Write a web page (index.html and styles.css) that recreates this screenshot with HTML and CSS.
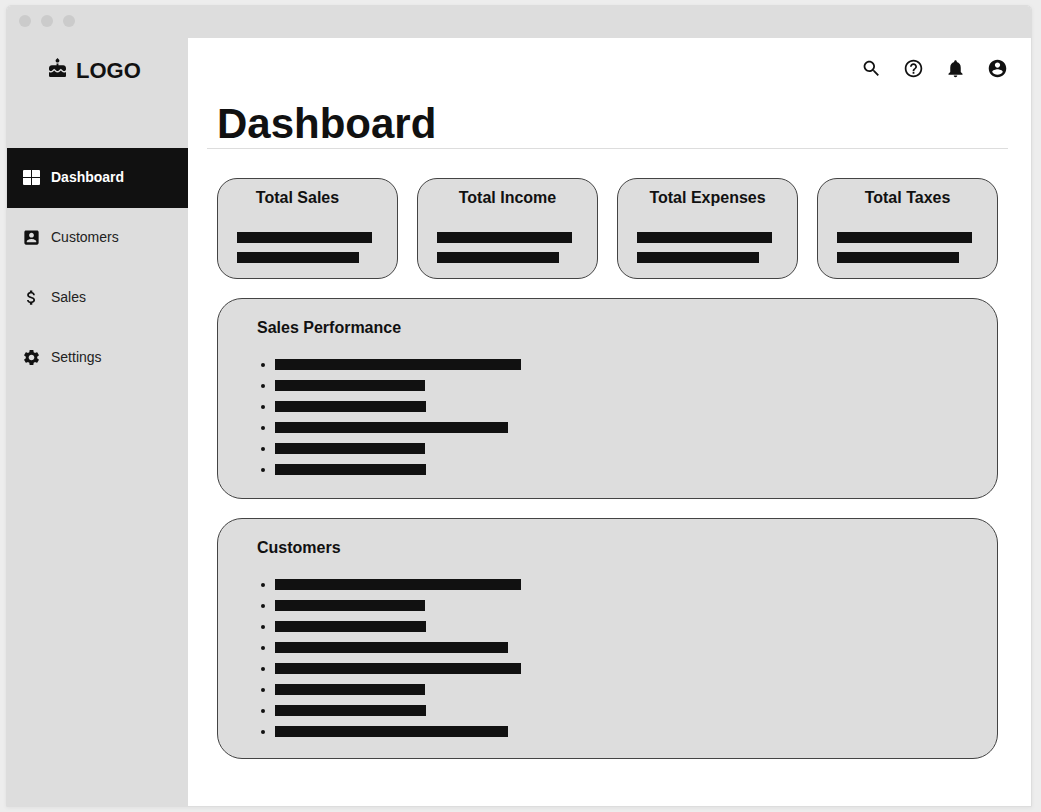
FILE: index.html
```html
<!DOCTYPE html>
<html lang="en">
<head>
<meta charset="utf-8">
<title>Dashboard</title>
<link rel="stylesheet" href="styles.css">
</head>
<body>
<div class="window">
  <div class="titlebar"><span class="dot"></span><span class="dot"></span><span class="dot"></span></div>
  <div class="layout">
    <aside class="sidebar">
      <div class="brand">
        <svg class="brand-icon" viewBox="3 1 18 21" preserveAspectRatio="none" aria-hidden="true"><path d="M12 6c1.11 0 2-.9 2-2 0-.38-.1-.73-.29-1.03L12 1l-1.71 1.97c-.19.3-.29.65-.29 1.03 0 1.1.9 2 2 2zm4.6 9.99l-1.07-1.07-1.08 1.07c-1.3 1.3-3.58 1.31-4.89 0l-1.07-1.07-1.09 1.07C6.75 16.64 5.88 17 4.96 17c-.73 0-1.4-.23-1.96-.61V21c0 .55.45 1 1 1h16c.55 0 1-.45 1-1v-4.61c-.56.38-1.23.61-1.96.61-.92 0-1.79-.36-2.44-1.01zM18 9h-5V7h-2v2H6c-1.66 0-3 1.34-3 3v1.54c0 1.08.88 1.96 1.96 1.96.52 0 1.02-.2 1.38-.57l2.14-2.13 2.13 2.13c.74.74 2.03.74 2.77 0l2.14-2.13 2.13 2.13c.37.37.86.57 1.38.57 1.08 0 1.96-.88 1.96-1.96V12C21 10.34 19.66 9 18 9z"/></svg>
        <span>LOGO</span>
      </div>
      <nav class="menu">
        <a class="menu-item active" href="#" aria-current="page"><svg viewBox="0 0 19 19" aria-hidden="true"><path d="M2 2h7v7H1V3q0-1 1-1zM10 2h7q1 0 1 1v6h-8zM1 10h8v7H2q-1 0-1-1zM10 10h8v6q0 1-1 1h-7z"/></svg>Dashboard</a>
        <a class="menu-item" href="#"><svg viewBox="0 0 24 24" aria-hidden="true"><path d="M3 5v14c0 1.1.89 2 2 2h14c1.1 0 2-.9 2-2V5c0-1.1-.9-2-2-2H5c-1.11 0-2 .9-2 2zm12 4c0 1.66-1.34 3-3 3s-3-1.34-3-3 1.34-3 3-3 3 1.34 3 3zm-9 8c0-2 4-3.1 6-3.1s6 1.1 6 3.1v1H6v-1z"/></svg>Customers</a>
        <a class="menu-item" href="#"><svg viewBox="0 0 24 24" aria-hidden="true"><path d="M11.8 10.9c-2.27-.59-3-1.2-3-2.15 0-1.09 1.01-1.85 2.7-1.85 1.78 0 2.44.85 2.5 2.1h2.21c-.07-1.72-1.12-3.3-3.21-3.81V3h-3v2.16c-1.94.42-3.5 1.68-3.5 3.61 0 2.31 1.91 3.46 4.7 4.13 2.5.6 3 1.48 3 2.41 0 .69-.49 1.79-2.7 1.79-2.06 0-2.87-.92-2.98-2.1h-2.2c.12 2.19 1.76 3.42 3.68 3.83V21h3v-2.15c1.95-.37 3.5-1.5 3.5-3.55 0-2.84-2.43-3.81-4.7-4.4z"/></svg>Sales</a>
        <a class="menu-item" href="#"><svg viewBox="0 0 24 24" aria-hidden="true"><path d="M19.14 12.94c.04-.3.06-.61.06-.94 0-.32-.02-.64-.07-.94l2.03-1.58c.18-.14.23-.41.12-.61l-1.92-3.32c-.12-.22-.37-.29-.59-.22l-2.39.96c-.5-.38-1.03-.7-1.62-.94l-.36-2.54c-.04-.24-.24-.41-.48-.41h-3.84c-.24 0-.43.17-.47.41l-.36 2.54c-.59.24-1.13.57-1.62.94l-2.39-.96c-.22-.08-.47 0-.59.22L2.74 8.87c-.12.21-.08.47.12.61l2.03 1.58c-.05.3-.09.63-.09.94s.02.64.07.94l-2.03 1.58c-.18.14-.23.41-.12.61l1.92 3.32c.12.22.37.29.59.22l2.39-.96c.5.38 1.03.7 1.62.94l.36 2.54c.05.24.24.41.48.41h3.84c.24 0 .44-.17.47-.41l.36-2.54c.59-.24 1.13-.56 1.62-.94l2.39.96c.22.08.47 0 .59-.22l1.92-3.32c.12-.22.07-.47-.12-.61l-2.01-1.58zM12 15.6c-1.98 0-3.6-1.62-3.6-3.6s1.62-3.6 3.6-3.6 3.6 1.62 3.6 3.6-1.62 3.6-3.6 3.6z"/></svg>Settings</a>
      </nav>
    </aside>
    <main class="main">
      <div class="toolbar">
        <button class="icon-button" type="button" aria-label="Search"><svg viewBox="0 0 24 24"><path d="M15.5 14h-.79l-.28-.27C15.41 12.59 16 11.11 16 9.5 16 5.91 13.09 3 9.5 3S3 5.91 3 9.5 5.91 16 9.5 16c1.61 0 3.09-.59 4.23-1.57l.27.28v.79l5 4.99L20.49 19l-4.99-5zm-6 0C7.01 14 5 11.99 5 9.5S7.01 5 9.5 5 14 7.01 14 9.5 11.99 14 9.5 14z"/></svg></button>
        <button class="icon-button" type="button" aria-label="Help"><svg viewBox="0 0 24 24"><path d="M11 18h2v-2h-2v2zm1-16C6.48 2 2 6.48 2 12s4.48 10 10 10 10-4.48 10-10S17.52 2 12 2zm0 18c-4.41 0-8-3.59-8-8s3.59-8 8-8 8 3.59 8 8-3.59 8-8 8zm0-14c-2.21 0-4 1.79-4 4h2c0-1.1.9-2 2-2s2 .9 2 2c0 2-3 1.75-3 5h2c0-2.25 3-2.5 3-5 0-2.21-1.79-4-4-4z"/></svg></button>
        <button class="icon-button" type="button" aria-label="Notifications"><svg viewBox="0 0 24 24"><path d="M12 22c1.1 0 2-.9 2-2h-4c0 1.1.89 2 2 2zm6-6v-5c0-3.07-1.64-5.64-4.5-6.32V4c0-.83-.67-1.5-1.5-1.5s-1.5.67-1.5 1.5v.68C7.63 5.36 6 7.92 6 11v5l-2 2v1h16v-1l-2-2z"/></svg></button>
        <button class="icon-button" type="button" aria-label="Account"><svg viewBox="0 0 24 24"><path d="M12 2C6.48 2 2 6.48 2 12s4.48 10 10 10 10-4.48 10-10S17.52 2 12 2zm0 3c1.66 0 3 1.34 3 3s-1.34 3-3 3-3-1.34-3-3 1.34-3 3-3zm0 14.2c-2.5 0-4.71-1.28-6-3.22.03-1.99 4-3.08 6-3.08 1.99 0 5.97 1.09 6 3.08-1.29 1.94-3.5 3.22-6 3.22z"/></svg></button>
      </div>
      <h1 class="page-title">Dashboard</h1>
      <div class="content">
        <div class="stats">
          <section class="card stat stat-lead"><h2 class="card-title">Total Sales</h2><div class="bars"><span class="bar w135"></span><span class="bar w122"></span></div></section>
          <section class="card stat"><h2 class="card-title">Total Income</h2><div class="bars"><span class="bar w135"></span><span class="bar w122"></span></div></section>
          <section class="card stat"><h2 class="card-title">Total Expenses</h2><div class="bars"><span class="bar w135"></span><span class="bar w122"></span></div></section>
          <section class="card stat"><h2 class="card-title">Total Taxes</h2><div class="bars"><span class="bar w135"></span><span class="bar w122"></span></div></section>
        </div>
        <section class="card panel">
          <h2 class="card-title">Sales Performance</h2>
          <ul class="list">
            <li><span class="bar w246"></span></li>
            <li><span class="bar w150"></span></li>
            <li><span class="bar w151"></span></li>
            <li><span class="bar w233"></span></li>
            <li><span class="bar w150"></span></li>
            <li><span class="bar w151"></span></li>
          </ul>
        </section>
        <section class="card panel">
          <h2 class="card-title">Customers</h2>
          <ul class="list">
            <li><span class="bar w246"></span></li>
            <li><span class="bar w150"></span></li>
            <li><span class="bar w151"></span></li>
            <li><span class="bar w233"></span></li>
            <li><span class="bar w246"></span></li>
            <li><span class="bar w150"></span></li>
            <li><span class="bar w151"></span></li>
            <li><span class="bar w233"></span></li>
          </ul>
        </section>
      </div>
    </main>
  </div>
</div>
</body>
</html>
```
FILE: styles.css
```css
* { box-sizing: border-box; }

body {
  margin: 0;
  padding: 5px 9px 5px 6px;
  min-height: 100vh;
  display: flex;
  background: #ededed;
  color: #111;
  font-family: "Liberation Sans", Arial, sans-serif;
}

h1, h2, ul { margin: 0; padding: 0; }
svg { display: block; fill: currentColor; }

.window {
  flex: 1;
  display: flex;
  flex-direction: column;
  border: 1px solid #ddd;
  border-radius: 5px 5px 0 0;
  background: #fff;
  box-shadow: 0 1px 4px rgba(0, 0, 0, 0.06);
}

.titlebar {
  height: 32px;
  display: flex;
  align-items: center;
  gap: 10px;
  padding: 0 12px 2px;
  background: #ddd;
  border-radius: 4px 4px 0 0;
}
.dot { width: 12px; height: 12px; border-radius: 50%; background: #cbcbcb; }

.layout { flex: 1; display: flex; }

.sidebar { width: 181px; flex: none; background: #ddd; }
.brand {
  height: 110px;
  display: flex;
  align-items: flex-start;
  gap: 10px;
  padding: 20px 0 0 42px;
  font-size: 22px;
  line-height: 26px;
  font-weight: bold;
}
.brand-icon { width: 17px; height: 19px; }

.menu-item {
  height: 60px;
  display: flex;
  align-items: center;
  gap: 10px;
  padding: 0 15px 2px;
  color: #222;
  font-size: 14px;
  text-decoration: none;
}
.menu-item svg { width: 19px; height: 19px; color: #111; }
.menu-item.active { background: #111; color: #fff; font-weight: bold; }
.menu-item.active svg { color: #fff; }

.main { flex: 1; min-width: 0; padding: 20px 23px 20px 19px; }
.toolbar { display: flex; justify-content: flex-end; gap: 21px; }
.icon-button {
  width: 21px;
  height: 21px;
  padding: 0;
  border: 0;
  background: none;
  color: #111;
  cursor: pointer;
}

.page-title {
  margin-top: 20px;
  padding: 0 10px;
  border-bottom: 1px solid #ddd;
  font-size: 42px;
  line-height: 49px;
}

.content {
  display: flex;
  flex-direction: column;
  gap: 19px;
  padding: 29px 10px 0;
}
.stats { display: grid; grid-template-columns: repeat(4, 1fr); gap: 19px; }

.card { background: #ddd; border: 1px solid #444; }
.card-title { font-size: 16px; line-height: 20px; }

.stat { min-height: 101px; border-radius: 20px; padding: 9px 19px 15px; }
.stat .card-title { text-align: center; }
.stat-lead .card-title { padding-right: 20px; }
.bars { display: flex; flex-direction: column; gap: 9px; margin-top: 24px; }

.bar { display: block; max-width: 100%; height: 11px; background: #111; }
.w122 { width: 122px; }
.w135 { width: 135px; }
.w150 { width: 150px; }
.w151 { width: 151px; }
.w233 { width: 233px; }
.w246 { width: 246px; }

.panel { min-height: 201px; border-radius: 25px; padding: 19px 39px 21px; }
.list {
  display: flex;
  flex-direction: column;
  gap: 10px;
  margin-top: 21px;
  padding-left: 4px;
  list-style: none;
}
.list li { display: flex; align-items: center; gap: 10px; }
.list li::before {
  content: "";
  width: 4px;
  height: 4px;
  border-radius: 50%;
  background: #111;
}
```
